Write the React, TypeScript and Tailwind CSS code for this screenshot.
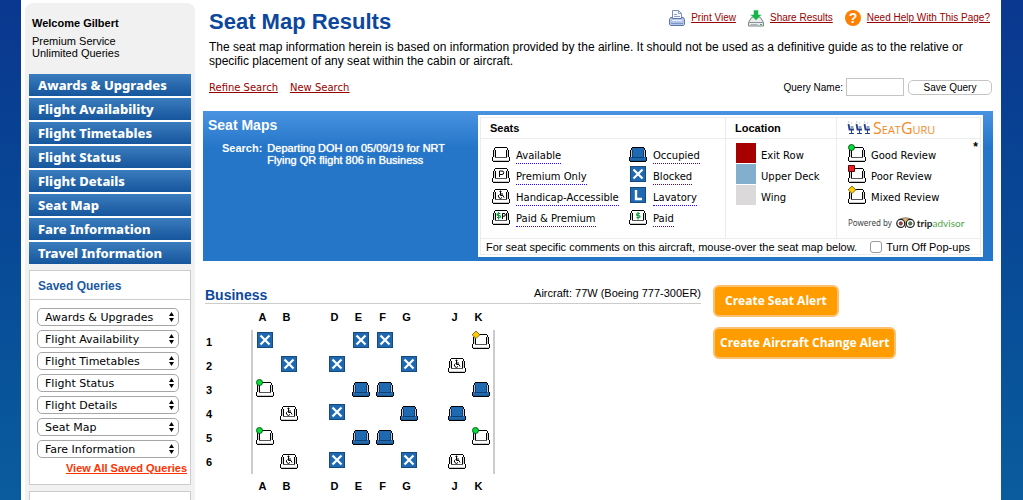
import type { ReactNode } from "react";

type SeatKind =
  | "available"
  | "occupied"
  | "premium"
  | "blocked"
  | "handicap"
  | "lavatory"
  | "paidPremium"
  | "paid"
  | "good"
  | "poor"
  | "mixed";

const navItems = [
  "Awards & Upgrades",
  "Flight Availability",
  "Flight Timetables",
  "Flight Status",
  "Flight Details",
  "Seat Map",
  "Fare Information",
  "Travel Information",
];

const savedQueries = navItems.slice(0, 7);

const seatLegend: { kind: SeatKind; label: string }[] = [
  { kind: "available", label: "Available" },
  { kind: "occupied", label: "Occupied" },
  { kind: "premium", label: "Premium Only" },
  { kind: "blocked", label: "Blocked" },
  { kind: "handicap", label: "Handicap-Accessible" },
  { kind: "lavatory", label: "Lavatory" },
  { kind: "paidPremium", label: "Paid & Premium" },
  { kind: "paid", label: "Paid" },
];

const reviewLegend: { kind: SeatKind; label: string }[] = [
  { kind: "good", label: "Good Review" },
  { kind: "poor", label: "Poor Review" },
  { kind: "mixed", label: "Mixed Review" },
];

const locations = [
  { label: "Exit Row", color: "bg-[#a60000]" },
  { label: "Upper Deck", color: "bg-[#84aecd]" },
  { label: "Wing", color: "bg-[#dbd9da]" },
];

// empty strings are the aisles
const columns = ["A", "B", "", "D", "E", "F", "G", "", "J", "K"];

const rows: { num: number; seats: Record<string, SeatKind> }[] = [
  { num: 1, seats: { A: "blocked", E: "blocked", F: "blocked", K: "mixed" } },
  { num: 2, seats: { B: "blocked", D: "blocked", G: "blocked", J: "handicap" } },
  { num: 3, seats: { A: "good", E: "occupied", F: "occupied", K: "occupied" } },
  { num: 4, seats: { B: "handicap", D: "blocked", G: "occupied", J: "occupied" } },
  { num: 5, seats: { A: "good", E: "occupied", F: "occupied", K: "good" } },
  { num: 6, seats: { B: "handicap", D: "blocked", G: "blocked", J: "handicap" } },
];

const SeatIcon = ({ kind }: { kind: SeatKind }) => {
  if (kind === "blocked" || kind === "lavatory") {
    return (
      <svg width="18" height="18" viewBox="0 0 18 18" className="block shrink-0">
        <rect x="1.5" y="1.5" width="15" height="15" fill="#1f68b2" stroke="#174a7c" />
        {kind === "blocked" ? (
          <path d="M4.500 4.500l9 9M13.500 4.500l-9 9" stroke="#fff" strokeWidth="2.2" />
        ) : (
          <path d="M7 4v9h6" fill="none" stroke="#fff" strokeWidth="2.4" />
        )}
      </svg>
    );
  }
  const occupied = kind === "occupied";
  return (
    <svg width="18" height="18" viewBox="0 0 18 18" className="block shrink-0">
      <g shapeRendering="crispEdges">
        <path d="M3 4h12v9H3z" fill={occupied ? "#1f68b2" : "#fff"} />
        <path d="M2 6h1v7H2zM15 6h1v7h-1z" fill={occupied ? "#b9c4d0" : "#d8d8d8"} />
        <path d="M3 3h12v1H3zM2 4h1v2H2zM15 4h1v2h-1zM1 6h1v7H1zM16 6h1v7h-1z" fill="#000" />
        <path d="M3 6h1v7H3zM14 6h1v7h-1z" fill={occupied ? "#123f6d" : "#000"} />
        <path d="M1 13h16v4H1z" fill={occupied ? "#1f68b2" : "#fff"} />
        <path d="M1 16h16v1H1z" fill={occupied ? "#1a5896" : "#c8c8c8"} />
        <path d="M3 13h12v1H3z" fill={occupied ? "#123f6d" : "#555"} />
        <path d="M0 13h1v4H0zM17 13h1v4h-1zM1 17h16v1H1z" fill="#000" />
      </g>
      {kind === "premium" && (
        <path d="M7.500 12V6h2.500a1.500 1.500 0 0 1 0 3.500H7.500" fill="none" stroke="#000" />
      )}
      {kind === "handicap" && (
        <g fill="none" stroke="#000">
          <circle cx="8.500" cy="5.500" r=".6" fill="#000" />
          <path d="M8.500 6v3.500h2.500l1 2M8.500 8H11M7.500 8.500a2 2 0 1 0 2.500 3" />
        </g>
      )}
      {(kind === "paid" || kind === "paidPremium") && (
        <g transform={kind === "paid" ? "translate(2 0)" : "translate(-.5 0)"}>
          <path d="M9 6.500H6.500q-1 0-1 1T6.500 8.500h1.500q1 0 1 1t-1 1H5.500M7 5v7.500" fill="none" stroke="#12a03a" strokeWidth="1.200" />
        </g>
      )}
      {kind === "paidPremium" && (
        <path d="M10.500 12V6.500h1.500a1.300 1.300 0 0 1 0 2.700h-1.500" fill="none" stroke="#000" />
      )}
      {kind === "good" && <circle cx="3.500" cy="3.500" r="3" fill="#00e03a" stroke="#0a4a14" strokeWidth=".9" />}
      {kind === "poor" && <path d="M.5.5h6v6h-6z" fill="#ee1c25" stroke="#5b0a0a" />}
      {kind === "mixed" && <path d="M4 0l3.800 3.800L4 7.600.2 3.800z" fill="#ffcb05" stroke="#6a4f00" strokeWidth=".8" />}
    </svg>
  );
};

const PrintIcon = () => (
  <svg width="16" height="18" viewBox="0 0 16 18">
    <path d="M3.500 9V1.500h6l3 3V9" fill="#f6f9ff" stroke="#7d8fb5" />
    <path d="M9.500 1.500v3h3M5 5.500h3M5 7.500h6" fill="none" stroke="#8ea0c4" />
    <path d="M1.500 8.500h2v1h9v-1h2l1 2v5l-1 1h-13l-1-1v-5z" fill="#b4c5ea" stroke="#5e75ab" />
    <path d="M3 11.500h10" stroke="#e8effd" />
    <path d="M2 14.500h12" stroke="#7c93c6" />
  </svg>
);

const ShareIcon = () => (
  <svg width="16" height="18" viewBox="0 0 16 18">
    <path d="M3.500 8.500h9l3 5v3.500H.5v-3.500z" fill="#e9ebed" stroke="#7b8288" />
    <path d="M1 13.500h14" stroke="#8d9398" />
    <path d="M2.500 15.500h7" stroke="#aab0b5" />
    <path d="M12 15.500h2" stroke="#37b34a" />
    <path d="M5.500 1h5v4.500H14L8 11.500 2 5.500h3.500z" fill="#17b34b" stroke="#fff" strokeWidth=".5" />
  </svg>
);

const HelpIcon = () => (
  <svg width="16" height="18" viewBox="0 0 16 18">
    <circle cx="8" cy="9" r="8" fill="#ff7f00" />
    <text x="8" y="14" textAnchor="middle" fontFamily="Liberation Sans, sans-serif" fontSize="14" fontWeight="700" fill="#fff">
      ?
    </text>
  </svg>
);

const SeatGuruMark = () => (
  <svg width="24" height="14" viewBox="0 0 24 14" fill="none" stroke="#27408b">
    {[0, 8, 16].map((x) => (
      <g key={x} transform={`translate(${x} 0)`}>
        <path d="M1.500 3l1 5.500H7" strokeWidth="1.800" />
        <path d="M4.500 9v3M2 12.500h5M3.500 6h3" />
        <circle cx="1.500" cy="1" r=".4" stroke="#a9b5d6" strokeWidth=".7" />
        <circle cx="4.500" cy="2" r=".3" stroke="#a9b5d6" strokeWidth=".7" />
      </g>
    ))}
  </svg>
);

const OwlMark = () => (
  <svg width="19" height="12" viewBox="0 0 20 12">
    <path d="M3 2.500Q10-1.500 17 2.500L10 9z" fill="#e0b878" stroke="#333" strokeWidth=".6" />
    <circle cx="5" cy="6.500" r="4.200" fill="#fff" stroke="#222" strokeWidth="1.300" />
    <circle cx="15" cy="6.500" r="4.200" fill="#fff" stroke="#222" strokeWidth="1.300" />
    <circle cx="5" cy="6.500" r="1.700" fill="#c33" stroke="#444" />
    <circle cx="15" cy="6.500" r="1.700" fill="#4a9a4a" stroke="#444" />
    <path d="M9 9.500h2L10 11.500z" fill="#222" />
  </svg>
);

const HeaderLink = ({ icon, children }: { icon: ReactNode; children: ReactNode }) => (
  <a href="#" className="flex items-center text-[10px] leading-4 text-[#990000] underline">
    <span className="mr-[6px]">{icon}</span>
    {children}
  </a>
);

const Sidebar = () => (
  <aside className="mt-[3px] flex w-[170px] shrink-0 flex-col rounded-t-lg bg-[#f1f1f1] px-1">
    <div className="px-[3px] pt-[14px] text-[11px] leading-3">
      <p className="font-bold">Welcome Gilbert</p>
      <p className="mt-[6px]">Premium Service</p>
      <p>Unlimited Queries</p>
    </div>
    <nav className="mt-[15px] flex flex-col gap-[2px] bg-white">
      {navItems.map((item) => (
        <a
          key={item}
          href="#"
          className="h-[22px] bg-linear-to-b from-[#3a7dbd] to-[#15569d] pl-[9px] font-['Noto_Sans',sans-serif] text-[13px] leading-[22px] font-extrabold text-white"
        >
          {item}
        </a>
      ))}
    </nav>
    <section className="mt-[6px] border border-[#ccc] bg-white pb-[9px]">
      <h2 className="h-[29px] border-b border-[#ccc] pl-2 text-[12px] leading-[30px] font-bold text-[#1b5a9e]">
        Saved Queries
      </h2>
      <div className="mt-2 flex flex-col gap-1 pr-[11px] pl-[7px]">
        {savedQueries.map((query) => (
          <div key={query} className="relative">
            <select
              aria-label={query}
              className="block h-[18px] w-full appearance-none rounded-[5px] border border-[#a6a6a6] bg-white pt-px pl-[7px] font-['DejaVu_Sans',sans-serif] text-[11px] leading-4"
            >
              <option>{query}</option>
            </select>
            <svg width="5" height="10" viewBox="0 0 5 10" className="pointer-events-none absolute top-1 right-[5px]">
              <path d="M2.500 0L5 4H0zM0 6h5L2.500 10z" />
            </svg>
          </div>
        ))}
      </div>
      <a href="#" className="mt-[3px] mr-[3px] block text-right text-[11px] leading-[14px] font-bold text-[#ff3300] underline">
        View All Saved Queries
      </a>
    </section>
    <div className="mt-[6px] flex-1 border border-b-0 border-[#ccc] bg-white" />
  </aside>
);

const Legend = () => (
  <div className="w-[505px] bg-white p-[2px]">
    <div className="border border-[#ececec]">
      <div className="grid grid-cols-[1fr_111px_143px] divide-x divide-[#ececec]">
        <div>
          <h3 className="h-[21px] border-b border-[#ececec] pl-[9px] text-[11px] leading-5 font-bold">Seats</h3>
          <ul className="grid grid-cols-[137px_1fr] pt-1 pl-[11px] font-['DejaVu_Sans',sans-serif] text-[10px]">
            {seatLegend.map(({ kind, label }) => (
              <li key={kind} className="flex h-[21px] items-end">
                <span className="mr-[6px] self-start pt-px">
                  <SeatIcon kind={kind} />
                </span>
                <span className="border-b border-dotted border-[#3300ff] leading-[14px]">{label}</span>
              </li>
            ))}
          </ul>
        </div>
        <div>
          <h3 className="h-[21px] border-b border-[#ececec] pl-[9px] text-[11px] leading-5 font-bold">Location</h3>
          <ul className="pt-1 pl-[10px] font-['DejaVu_Sans',sans-serif] text-[10px]">
            {locations.map(({ label, color }) => (
              <li key={label} className="flex h-[21px] items-start gap-[5px] leading-[26px]">
                <span className={`size-5 ${color}`} />
                {label}
              </li>
            ))}
          </ul>
        </div>
        <div>
          <h3 className="flex h-[21px] items-center gap-[2px] border-b border-[#ececec] pl-[10px] font-['Open_Sans',sans-serif] text-[16px] leading-5 text-[#f58a1f]">
            <SeatGuruMark />
            <span className="font-medium [font-variant:small-caps]">SeatGuru</span>
          </h3>
          <div className="relative pt-1 pl-[11px]">
            <span className="absolute top-0 right-[2px] text-[12px] leading-4 font-bold">*</span>
            <ul className="font-['DejaVu_Sans',sans-serif] text-[10px]">
              {reviewLegend.map(({ kind, label }) => (
                <li key={kind} className="flex h-[21px] items-start gap-[5px] leading-[26px]">
                  <span className="pt-px">
                    <SeatIcon kind={kind} />
                  </span>
                  {label}
                </li>
              ))}
            </ul>
            <p className="mt-[9px] mb-[7px] flex h-4 items-center font-['Noto_Sans',sans-serif] text-[8px] text-[#444]">
              Powered by
              <span className="mr-[2px] ml-1">
                <OwlMark />
              </span>
              <span className="font-['Lato',sans-serif] text-[10px] font-bold text-[#222]">trip</span>
              <span className="font-['Lato',sans-serif] text-[10px] text-[#4fa546]">advisor</span>
            </p>
          </div>
        </div>
      </div>
      <div className="flex h-4 items-center justify-between border-t border-[#ececec] pr-[10px] pl-[5px] text-[11px] leading-3">
        <p>For seat specific comments on this aircraft, mouse-over the seat map below.</p>
        <label className="flex items-center gap-1">
          <input type="checkbox" className="size-3 appearance-none rounded-[3px] border border-[#999] bg-white" />
          Turn Off Pop-ups
        </label>
      </div>
    </div>
  </div>
);

const ColumnLabels = ({ className }: { className: string }) => (
  <tr className={className}>
    <td />
    {columns.map((col, i) => (
      <th
        key={i}
        className={`pr-[5px] text-center ${i === 0 ? "border-l-2 border-transparent" : ""} ${i === 9 ? "border-r-2 border-transparent" : ""}`}
      >
        {col}
      </th>
    ))}
  </tr>
);

const SeatMap = () => (
  <table className="w-[290px] table-fixed border-separate border-spacing-0 text-[11px] font-bold">
    <colgroup>
      <col className="w-[46px]" />
      {columns.map((_, i) => (
        <col key={i} className={i === 0 || i === 9 ? "w-[26px]" : "w-6"} />
      ))}
    </colgroup>
    <thead>
      <ColumnLabels className="h-[26px]" />
    </thead>
    <tbody>
      {rows.map(({ num, seats }) => (
        <tr key={num} className="h-6">
          <th className="pl-px text-left">{num}</th>
          {columns.map((col, i) => (
            <td
              key={i}
              className={`px-[3px] pt-px align-top ${i === 0 ? "border-l-2 border-[#ccc]" : ""} ${i === 9 ? "border-r-2 border-[#ccc]" : ""}`}
            >
              {seats[col] && <SeatIcon kind={seats[col]} />}
            </td>
          ))}
        </tr>
      ))}
    </tbody>
    <tfoot>
      <ColumnLabels className="h-6" />
    </tfoot>
  </table>
);

const alertButton =
  "h-8 rounded-md border-2 border-[#fbc070] bg-[#ff9c00] font-['Open_Sans',sans-serif] text-[12px] leading-7 font-bold text-white";

export default function App() {
  return (
    <div className="flex min-h-screen bg-linear-to-b from-[#0a378f] to-[#0a5c9e] pr-[22px] pl-[21px] font-['Liberation_Sans',Arial,sans-serif] text-black">
      <div className="flex flex-1 bg-white pl-1">
        <Sidebar />
        <main className="min-w-0 flex-1 pr-2 pl-2">
          <header className="flex items-start justify-between pt-2 pr-[3px] pl-[6px]">
            <h1 className="text-[22px] leading-7 font-bold text-[#0c479d]">Seat Map Results</h1>
            <div className="flex gap-3 pt-px">
              <HeaderLink icon={<PrintIcon />}>Print View</HeaderLink>
              <HeaderLink icon={<ShareIcon />}>Share Results</HeaderLink>
              <HeaderLink icon={<HelpIcon />}>Need Help With This Page?</HeaderLink>
            </div>
          </header>
          <p className="mt-1 pr-5 pl-[6px] text-[12px] leading-[14px]">
            The seat map information herein is based on information provided by the airline. It should not be used as a
            definitive guide as to the relative or specific placement of any seat within the cabin or aircraft.
          </p>
          <div className="mt-[10px] flex h-[18px] items-center justify-between pr-px pl-[6px] text-[10px]">
            <div className="flex gap-3 font-['DejaVu_Sans',sans-serif] text-[#990000] underline">
              <a href="#">Refine Search</a>
              <a href="#">New Search</a>
            </div>
            <form className="flex items-center">
              <label htmlFor="query-name" className="mr-[3px]">
                Query Name:
              </label>
              <input id="query-name" type="text" className="mr-1 h-[18px] w-[58px] border border-[#c4c4c4] bg-white px-1" />
              <button type="button" className="h-[15px] w-[84px] rounded-[5px] border border-[#c4c4c4] bg-white leading-[14px]">
                Save Query
              </button>
            </form>
          </div>
          <section className="mt-[15px] flex justify-between bg-[#2576c9] bg-[linear-gradient(#4a93e1,#2576c9_36px)] py-1 pr-[10px] pl-[5px] text-white">
            <div>
              <h2 className="text-[14px] leading-5 font-bold">Seat Maps</h2>
              <div className="mt-[7px] flex gap-[5px] pl-[14px] text-[11px] leading-3">
                <span className="font-bold">Search:</span>
                <p className="[text-shadow:0_0_1px_#fff]">
                  Departing DOH on 05/09/19 for NRT
                  <br />
                  Flying QR flight 806 in Business
                </p>
              </div>
            </div>
            <div className="text-black">
              <Legend />
            </div>
          </section>
          <div className="mt-6 flex items-start gap-3 pl-[2px]">
            <section className="w-[496px]">
              <div className="flex h-[19px] items-start justify-between border-b border-[#ccc]">
                <h2 className="pt-[2px] text-[14px] leading-4 font-bold text-[#0c479d]">Business</h2>
                <p className="text-[11px] leading-4">Aircraft: 77W (Boeing 777-300ER)</p>
              </div>
              <SeatMap />
            </section>
            <div className="flex flex-col items-start gap-[10px]">
              <button type="button" className={`${alertButton} px-[10px]`}>
                Create Seat Alert
              </button>
              <button type="button" className={`${alertButton} px-[5px]`}>
                Create Aircraft Change Alert
              </button>
            </div>
          </div>
        </main>
      </div>
    </div>
  );
}
